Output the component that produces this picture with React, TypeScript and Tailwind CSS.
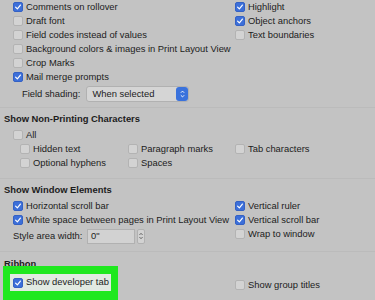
import React from "react";

const Box = ({ checked }: { checked?: boolean }) =>
  checked ? (
    <span className="flex h-[10px] w-[10px] shrink-0 items-center justify-center rounded-[2px] bg-[#3c6fd9] border border-[#3461c4]">
      <svg viewBox="0 0 10 10" className="h-[8px] w-[8px]">
        <path d="M2 5.2 L4.2 7.4 L8 2.6" fill="none" stroke="#fff" strokeWidth="1.5" strokeLinecap="round" strokeLinejoin="round" />
      </svg>
    </span>
  ) : (
    <span className="h-[10px] w-[10px] shrink-0 rounded-[2px] border border-[#b3b3b3] bg-[#d3d3d3]" />
  );

const Row = ({ label, checked, className = "" }: { label: string; checked?: boolean; className?: string }) => (
  <div className={`flex h-[14px] items-center gap-[3px] whitespace-nowrap ${className}`}>
    <Box checked={checked} />
    <span>{label}</span>
  </div>
);

const Heading = ({ children }: { children: React.ReactNode }) => (
  <div className="flex h-[14px] items-center pl-[4px] font-bold">{children}</div>
);

const Rule = () => <div className="h-px bg-[#bbbbbb]" />;

export default function App() {
  return (
    <div
      className="h-[300px] w-[375px] overflow-hidden bg-[#c3c3c3] text-[9.4px] text-[#1c1c1c]"
      style={{ fontFamily: '"Liberation Sans", Arial, sans-serif' }}
    >
      {/* View options */}
      <div className="flex">
        <div className="w-[235px] shrink-0 pl-[13px]">
          <Row label="Comments on rollover" checked />
          <Row label="Draft font" />
          <Row label="Field codes instead of values" />
          <Row label="Background colors & images in Print Layout View" />
          <Row label="Crop Marks" />
          <Row label="Mail merge prompts" checked />
        </div>
        <div>
          <Row label="Highlight" checked />
          <Row label="Object anchors" checked />
          <Row label="Text boundaries" />
        </div>
      </div>
      <div className="mt-[2px] flex h-[16px] items-center gap-[6px] pl-[22px]">
        <span>Field shading:</span>
        <div className="flex h-[16px] w-[103px] items-center justify-between rounded-[3px] border border-[#b1b1b1] bg-[#d5d5d5] pl-[5px]">
          <span>When selected</span>
          <span className="flex h-[14px] w-[12px] flex-col items-center justify-center rounded-[3px] bg-[#3a72dc]">
            <svg viewBox="0 0 8 12" className="h-[10px] w-[7px]">
              <path d="M2 4.5 L4 2.5 L6 4.5 M2 7.5 L4 9.5 L6 7.5" fill="none" stroke="#fff" strokeWidth="1.1" />
            </svg>
          </span>
        </div>
      </div>

      <div className="mt-[5px]">
        <Rule />
      </div>

      {/* Non-printing characters */}
      <div className="mt-[4px]">
        <Heading>Show Non-Printing Characters</Heading>
        <Row label="All" className="mt-[2px] pl-[13px]" />
        <div className="flex pl-[20px]">
          <div className="w-[108px] shrink-0">
            <Row label="Hidden text" />
            <Row label="Optional hyphens" />
          </div>
          <div className="w-[107px] shrink-0">
            <Row label="Paragraph marks" />
            <Row label="Spaces" />
          </div>
          <div>
            <Row label="Tab characters" />
          </div>
        </div>
      </div>

      <div className="mt-[8px]">
        <Rule />
      </div>

      {/* Window elements */}
      <div className="mt-[4px]">
        <Heading>Show Window Elements</Heading>
        <div className="mt-[2px] flex">
          <div className="w-[235px] shrink-0 pl-[13px]">
            <Row label="Horizontal scroll bar" checked />
            <Row label="White space between pages in Print Layout View" checked />
            <div className="mt-px flex h-[16px] items-center">
              <span className="w-[74px] shrink-0">Style area width:</span>
              <span className="flex h-[15px] w-[48px] items-center border border-[#b1b1b1] bg-[#d2d2d2] pl-[3px]">0"</span>
              <span className="ml-[2px] flex h-[15px] w-[8px] items-center justify-center rounded-[2px] border border-[#b1b1b1] bg-[#d2d2d2]">
                <svg viewBox="0 0 8 12" className="h-[10px] w-[6px]">
                  <path d="M2 4.5 L4 2.5 L6 4.5 M2 7.5 L4 9.5 L6 7.5" fill="none" stroke="#333" strokeWidth="1" />
                </svg>
              </span>
            </div>
          </div>
          <div>
            <Row label="Vertical ruler" checked />
            <Row label="Vertical scroll bar" checked />
            <Row label="Wrap to window" />
          </div>
        </div>
      </div>

      <div className="mt-[7px]">
        <Rule />
      </div>

      {/* Ribbon */}
      <div className="mt-[5px]">
        <Heading>Ribbon</Heading>
        <div className="flex">
          <div className="w-[235px] shrink-0 pl-[3px]">
            <div className="relative -mt-[5px] h-[40px] w-[115px] bg-[#1fe81f] pl-[7px] pt-[8px]">
              <div className="flex h-[17px] w-[101px] items-center bg-[#e2eae2] pl-[3px]">
                <Row label="Show developer tab" checked />
              </div>
            </div>
          </div>
          <div className="pt-[7px]">
            <Row label="Show group titles" />
          </div>
        </div>
      </div>
    </div>
  );
}
